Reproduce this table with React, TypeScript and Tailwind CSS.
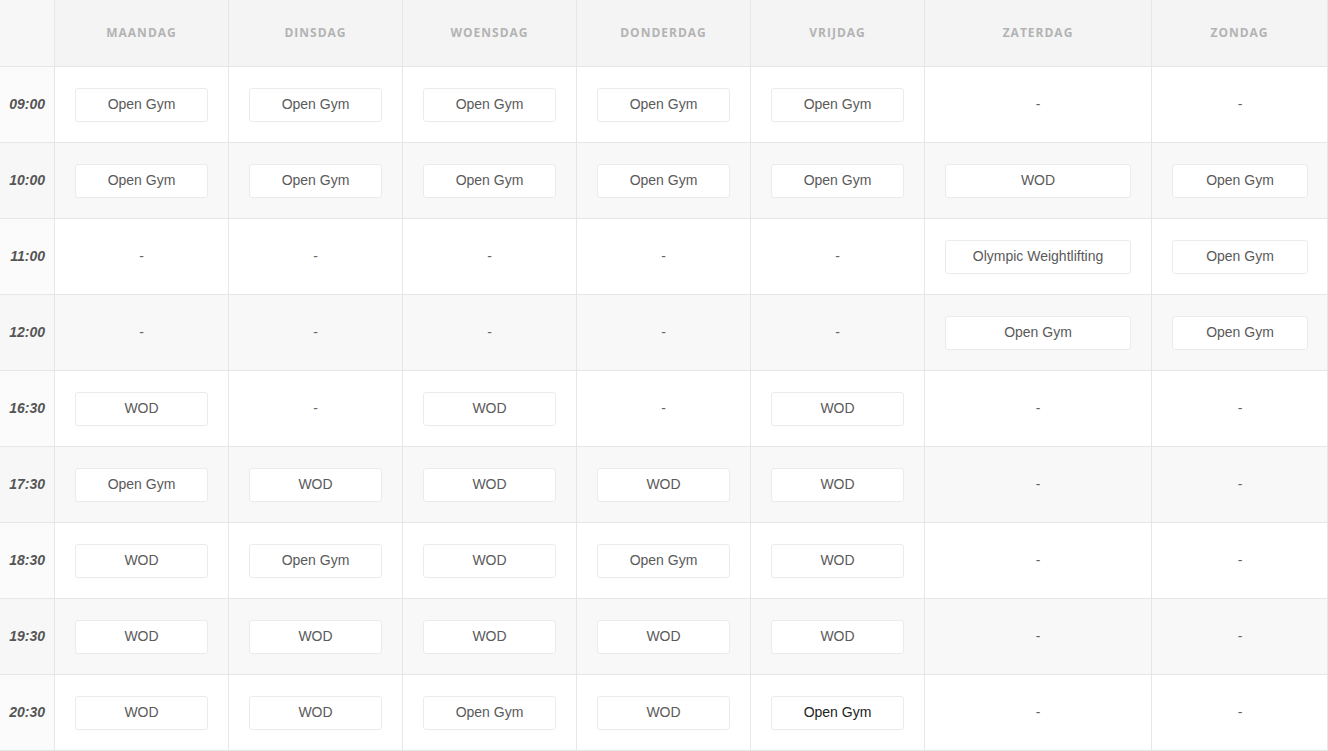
const DAYS = ["Maandag", "Dinsdag", "Woensdag", "Donderdag", "Vrijdag", "Zaterdag", "Zondag"];

const OG = "Open Gym";
const W = "WOD";
const OW = "Olympic Weightlifting";

const SCHEDULE: { time: string; slots: (string | null)[] }[] = [
  { time: "09:00", slots: [OG, OG, OG, OG, OG, null, null] },
  { time: "10:00", slots: [OG, OG, OG, OG, OG, W, OG] },
  { time: "11:00", slots: [null, null, null, null, null, OW, OG] },
  { time: "12:00", slots: [null, null, null, null, null, OG, OG] },
  { time: "16:30", slots: [W, null, W, null, W, null, null] },
  { time: "17:30", slots: [OG, W, W, W, W, null, null] },
  { time: "18:30", slots: [W, OG, W, OG, W, null, null] },
  { time: "19:30", slots: [W, W, W, W, W, null, null] },
  { time: "20:30", slots: [W, W, OG, W, OG, null, null] },
];

function Slot({ label, active }: { label: string | null; active?: boolean }) {
  if (!label) {
    return <span className="text-[14px] text-[#666]">-</span>;
  }
  return (
    <div
      className={`w-full h-[34px] flex items-center justify-center bg-white border border-[#ebebeb] rounded-[3px] text-[14px] ${
        active ? "text-[#222]" : "text-[#5a5a5a]"
      }`}
    >
      {label}
    </div>
  );
}

export default function App() {
  return (
    <div className="w-[1328px] h-[751px] bg-white overflow-hidden font-['Liberation_Sans',Arial,sans-serif]">
      <div className="w-[1328px] grid grid-cols-[55px_174px_174px_174px_174px_174px_227px_176px] grid-rows-[67px_repeat(9,76px)]">
        {/* kop */}
        <div className="bg-[#f7f7f7] border-r border-b border-[#e6e6e6]" />
        {DAYS.map((day) => (
          <div
            key={day}
            className="bg-[#f4f4f4] border-r border-b border-[#e6e6e6] flex items-center justify-center"
          >
            <span className="font-['Open_Sans',sans-serif] font-bold text-[12px] tracking-[1px] uppercase text-[#b3b3b3]">
              {day}
            </span>
          </div>
        ))}

        {/* rijen */}
        {SCHEDULE.map((row, r) => {
          const shaded = r % 2 === 1;
          const bg = shaded ? "bg-[#f8f8f8]" : "bg-white";
          return [
            <div
              key={row.time}
              className={`${shaded ? "bg-[#f7f7f7]" : "bg-[#fbfbfb]"} border-r border-b border-[#e6e6e6] flex items-center justify-end pr-[9px]`}
            >
              <span className="font-bold italic text-[14px] text-[#555]">{row.time}</span>
            </div>,
            ...row.slots.map((slot, c) => (
              <div
                key={row.time + c}
                className={`${bg} border-r border-b border-[#e6e6e6] flex items-center justify-center ${
                  c === 6 ? "pl-[20px] pr-[19px]" : "px-[20px]"
                }`}
              >
                <Slot label={slot} active={r === 8 && c === 4} />
              </div>
            )),
          ];
        })}
      </div>
    </div>
  );
}
